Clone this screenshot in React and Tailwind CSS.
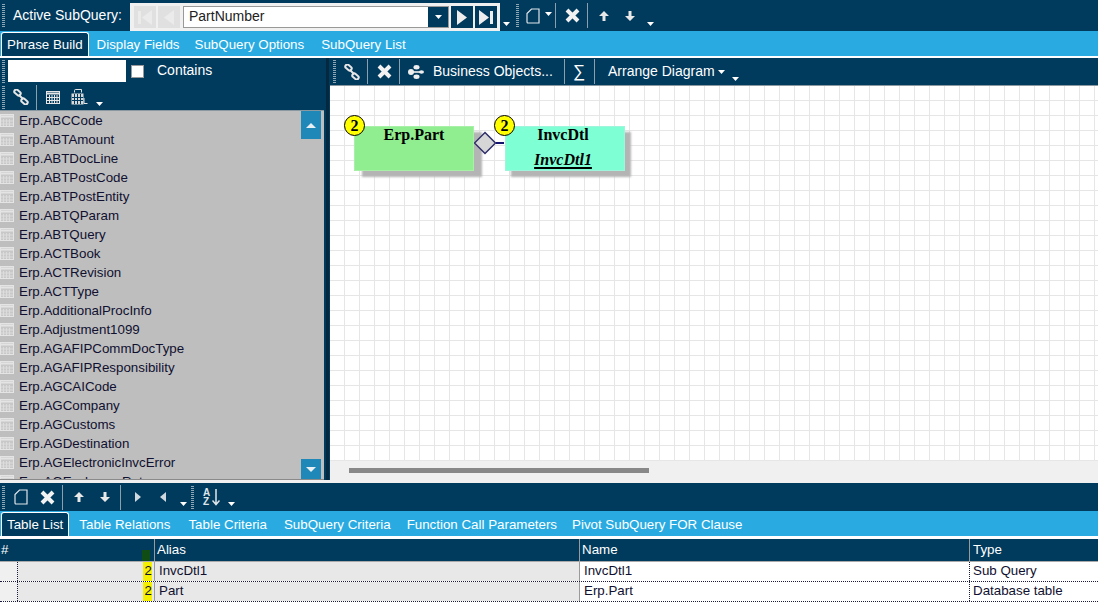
const tables = [
    'Erp.ABCCode', 'Erp.ABTAmount', 'Erp.ABTDocLine', 'Erp.ABTPostCode', 'Erp.ABTPostEntity',
    'Erp.ABTQParam', 'Erp.ABTQuery', 'Erp.ACTBook', 'Erp.ACTRevision', 'Erp.ACTType',
    'Erp.AdditionalProcInfo', 'Erp.Adjustment1099', 'Erp.AGAFIPCommDocType', 'Erp.AGAFIPResponsibility',
    'Erp.AGCAICode', 'Erp.AGCompany', 'Erp.AGCustoms', 'Erp.AGDestination', 'Erp.AGElectronicInvcError',
    'Erp.AGExchangeRate',
];

const Grip = ({ className = '' }) => (
    <div className={`w-[3px] h-[23px] shrink-0 bg-[repeating-linear-gradient(to_bottom,#8fa6b5_0_1px,transparent_1px_2px)] ${className}`} />
);

const Sep = ({ className = '' }) => <div className={`w-px h-[25px] shrink-0 bg-[#8c9fac] ${className}`} />;

const Caret = ({ className = '' }) => (
    <svg width="7" height="4" viewBox="0 0 7 4" className={`shrink-0 ${className}`}>
        <path d="M0 0h7L3.5 4z" fill="#fff" />
    </svg>
);

const LinkIcon = ({ className = '' }) => (
    <svg width="16" height="16" viewBox="0 0 16 16" className={`shrink-0 ${className}`} fill="none" stroke="#e6e6e6" strokeWidth="2">
        <rect x="1" y="1.500" width="7" height="4" rx="2" transform="rotate(40 4.500 3.500)" />
        <rect x="8" y="10.500" width="7" height="4" rx="2" transform="rotate(40 11.500 12.500)" />
        <path d="M6 6l4 4" />
    </svg>
);

const XIcon = ({ className = '' }) => (
    <svg width="15" height="15" viewBox="0 0 15 15" className={`shrink-0 ${className}`} stroke="#f2f2f2" strokeWidth="4">
        <path d="M2 2l11 11M13 2L2 13" />
    </svg>
);

const DocIcon = ({ className = '' }) => (
    <svg width="14" height="16" viewBox="0 0 14 16" className={`shrink-0 ${className}`} fill="none" stroke="#dfe5e9" strokeWidth="1.200">
        <path d="M1 5.500L5.500 1H13v14H2a1 1 0 0 1-1-1z" />
    </svg>
);

const ArrowIcon = ({ dir, className = '' }) => (
    <svg width="10" height="10" viewBox="0 0 10 10" className={`shrink-0 ${className}`} fill="#e8e8e8">
        {dir === 'up' ? <path d="M5 0l5 5H6.500v5h-3V5H0z" /> : <path d="M5 10L0 5h3.500V0h3v5H10z" />}
    </svg>
);

const BizIcon = () => (
    <svg width="16" height="14" viewBox="0 0 16 14" className="shrink-0" fill="#eee">
        <circle cx="3" cy="7" r="3" />
        <ellipse cx="8.500" cy="2.200" rx="3" ry="2.200" />
        <ellipse cx="8.500" cy="11.800" rx="3" ry="2.200" />
        <ellipse cx="13.500" cy="7" rx="2.500" ry="1.800" />
        <rect x="3" y="6.200" width="10" height="1.600" />
    </svg>
);

const CalendarIcon = () => (
    <svg width="14" height="13" viewBox="0 0 14 13" className="shrink-0" fill="none" stroke="#e6e6e6">
        <rect x="0.500" y="0.500" width="13" height="12" />
        <path d="M1 2.500h12" strokeWidth="2" />
        <path d="M3.500 4v8M6 4v8M8.500 4v8M11 4v8M1 6.500h12M1 9.500h12" />
    </svg>
);

const CalcIcon = () => (
    <svg width="17" height="16" viewBox="0 0 17 16" className="shrink-0" fill="none" stroke="#e6e6e6">
        <path d="M3.500 3.500V1.500C3.500.8 4 .5 4.500.5h6v3" />
        <rect x="0.500" y="4.500" width="12" height="11" fill="#d8d8d8" stroke="none" />
        <path d="M3.500 5v10M6.500 5v10M9.500 5v10M1 8.500h11M1 11.500h11" stroke="#003a5d" />
        <path d="M13 9v5.500h3.500" />
    </svg>
);

const TableRowIcon = () => (
    <svg width="14" height="13" viewBox="0 0 14 13" className="shrink-0" fill="none" stroke="#e4e4e4">
        <rect x="0.500" y="0.500" width="13" height="12" fill="#c8c8c8" />
        <path d="M1 2.500h12" strokeWidth="2" />
        <path d="M3.500 5v7M6.500 5v7M9.500 5v7M1 7h12M1 10h12" stroke="#dcdcdc" />
    </svg>
);

const Tri = ({ dir, fill = '#fff', small, className = '' }) => (
    <svg width={small ? 6 : 10} height={small ? 10 : 15} viewBox="0 0 10 15" preserveAspectRatio="none" className={`shrink-0 ${className}`}>
        <path d={dir === 'right' ? 'M0 0l10 7.500L0 15z' : 'M10 0L0 7.500 10 15z'} fill={fill} />
    </svg>
);

const Tab = ({ label, active, className = '' }) => (
    active ? (
        <div className={`h-[24px] px-[5px] mt-[1px] flex items-center bg-[#003a5d] text-white border border-b-0 border-white rounded-t-[3px] ${className}`}>
            {label}
        </div>
    ) : (
        <div className={`text-white pt-[2px] ${className}`}>{label}</div>
    )
);

const Badge = ({ className = '' }) => (
    <div className={`absolute w-[21px] h-[21px] rounded-full bg-[#ffff00] border border-black flex items-center justify-center font-bold text-[16px] text-black ${className}`}>
        2
    </div>
);

function TableRow({ alias, name, type }) {
    return (
        <div className="flex h-[20px] border-b border-dotted border-[#1a1a40] text-[#101030] text-[13.33px] leading-[18px]">
            <div className="w-[18px] shrink-0 bg-[#f0f0f0] border-r border-dotted border-[#1a1a40]" />
            <div className="w-[137px] shrink-0 bg-[#e8e8e8] flex justify-end border-r border-[#9a9a9a]">
                <span className="w-[9px] mr-[2px] bg-[#f5f000] text-right">2</span>
            </div>
            <div className="w-[425px] shrink-0 bg-[#e8e8e8] border-r border-[#9a9a9a] pl-[4px]">{alias}</div>
            <div className="w-[390px] shrink-0 bg-white border-r border-dotted border-[#1a1a40] pl-[4px]">{name}</div>
            <div className="flex-1 bg-white pl-[3px]">{type}</div>
        </div>
    );
}

export default function App() {
    return (
        <div className="w-[1098px] h-[602px] overflow-hidden bg-white text-[14px] font-['Liberation_Sans',Arial,sans-serif] flex flex-col">
            {/* top toolbar */}
            <div className="h-[31px] shrink-0 bg-[#003a5d] flex items-center text-white">
                <Grip className="ml-[2px]" />
                <span className="ml-[8px] w-[117px]">Active SubQuery:</span>
                <div className="w-[370px] h-[28px] mt-[3px] bg-[#f0f0f0] flex items-center pl-[4px]">
                    <div className="w-[22px] h-[22px] bg-[#e0e0e0] flex items-center justify-center gap-[1px]">
                        <div className="w-[3px] h-[13px] bg-[#ebebeb]" />
                        <Tri dir="left" fill="#ebebeb" />
                    </div>
                    <div className="w-[22px] h-[22px] ml-[2px] bg-[#e0e0e0] flex items-center justify-center">
                        <Tri dir="left" fill="#ebebeb" />
                    </div>
                    <div className="w-[266px] h-[22px] ml-[3px] bg-white border border-[#999] flex items-center">
                        <span className="flex-1 pl-[5px] text-[#222] -mt-[1px]">PartNumber</span>
                        <div className="w-[20px] h-full bg-[#003a5d] flex items-center justify-center">
                            <Caret />
                        </div>
                    </div>
                    <div className="w-[22px] h-[22px] ml-[2px] bg-[#003a5d] flex items-center justify-center">
                        <Tri dir="right" fill="#eee" />
                    </div>
                    <div className="w-[22px] h-[22px] ml-[2px] bg-[#003a5d] flex items-center justify-center gap-[1px]">
                        <Tri dir="right" fill="#eee" />
                        <div className="w-[3px] h-[13px] bg-[#eee]" />
                    </div>
                </div>
                <Caret className="ml-[3px] mt-[16px]" />
                <Grip className="ml-[6px]" />
                <DocIcon className="ml-[7px]" />
                <Caret className="ml-[5px] -mt-[3px]" />
                <Sep className="ml-[3px]" />
                <XIcon className="ml-[9px]" />
                <Sep className="ml-[7px]" />
                <ArrowIcon dir="up" className="ml-[11px]" />
                <ArrowIcon dir="down" className="ml-[16px]" />
                <Caret className="ml-[12px] mt-[16px]" />
            </div>

            {/* main tabs */}
            <div className="h-[25px] shrink-0 bg-[#29abe2] flex items-start pl-[1px] text-[13.33px]">
                <Tab label="Phrase Build" active />
                <Tab label="Display Fields" className="ml-[8px] mt-[2px]" />
                <Tab label="SubQuery Options" className="ml-[15px] mt-[2px]" />
                <Tab label="SubQuery List" className="ml-[17px] mt-[2px]" />
            </div>
            <div className="h-[2px] shrink-0 bg-white" />

            {/* work area */}
            <div className="h-[425px] shrink-0 flex bg-[#003a5d]">
                <div className="w-[330px] shrink-0 flex flex-col">
                    <div className="h-[422px] shrink-0 flex">
                        <div className="w-[326px] shrink-0 flex flex-col">
                            <div className="h-[26px] shrink-0 flex items-center text-white">
                                <Grip className="ml-[2px]" />
                                <div className="ml-[3px] w-[118px] h-[22px] bg-white" />
                                <div className="ml-[5px] w-[13px] h-[13px] bg-white border border-[#999]" />
                                <span className="ml-[13px] -mt-[2px]">Contains</span>
                            </div>
                            <div className="h-[26px] shrink-0 flex items-center">
                                <Grip className="ml-[2px]" />
                                <LinkIcon className="ml-[8px]" />
                                <Sep className="ml-[7px]" />
                                <div className="ml-[9px]"><CalendarIcon /></div>
                                <div className="ml-[11px]"><CalcIcon /></div>
                                <Caret className="ml-[8px] mt-[14px]" />
                            </div>
                            <div className="relative h-[370px] w-[324px] bg-[#bebebe] border-t border-[#8a98a2] border-b border-b-[#8a8a8a] overflow-hidden text-[#101030] text-[13.33px]">
                                {tables.map(t => (
                                    <div key={t} className="h-[19px] flex items-center">
                                        <TableRowIcon />
                                        <span className="ml-[5px]">{t}</span>
                                    </div>
                                ))}
                                {/* list scroll buttons */}
                                <div className="absolute right-[3px] top-0 w-[20px] h-[28px] bg-[#1f88b8] flex items-center justify-center">
                                    <svg width="10" height="5" viewBox="0 0 10 5"><path d="M5 0l5 5H0z" fill="#e8f0f4" /></svg>
                                </div>
                                <div className="absolute right-[3px] bottom-0 w-[20px] h-[20px] bg-[#1f88b8] flex items-center justify-center">
                                    <svg width="10" height="5" viewBox="0 0 10 5"><path d="M0 0h10L5 5z" fill="#e8f0f4" /></svg>
                                </div>
                            </div>
                        </div>
                        <div className="w-[3px] shrink-0 bg-[#06283f]" />
                    </div>
                    <div className="h-[3px] shrink-0 bg-[#f0f0f0]" />
                </div>

                <div className="flex-1 flex flex-col">
                    <div className="h-[28px] shrink-0 flex items-center text-white border-b border-[#8a98a2]">
                        <Grip className="ml-[3px]" />
                        <LinkIcon className="ml-[8px]" />
                        <Sep className="ml-[7px]" />
                        <XIcon className="ml-[9px]" />
                        <Sep className="ml-[7px]" />
                        <div className="ml-[8px]"><BizIcon /></div>
                        <span className="ml-[9px] w-[121px]">Business Objects...</span>
                        <Sep className="ml-[10px]" />
                        <span className="ml-[8px] w-[13px] text-[17px]">∑</span>
                        <Sep className="ml-[8px]" />
                        <span className="ml-[13px]">Arrange Diagram</span>
                        <Caret className="ml-[3px]" />
                        <Caret className="ml-[7px] mt-[14px]" />
                    </div>

                    {/* diagram canvas */}
                    <div className="relative h-[375px] shrink-0 bg-white bg-[linear-gradient(to_right,transparent_14px,#e6e6e6_14px),linear-gradient(to_bottom,transparent_14px,#e6e6e6_14px)] bg-[size:15px_15px] font-['Liberation_Serif',serif] text-black font-bold text-[16px]">
                        <div className="absolute left-[24px] top-[40px] w-[120px] h-[45px] bg-[#90ee90] border border-[#a8f0a8] shadow-[8px_6px_2px_#b4b4b4] text-center leading-[16px]">
                            Erp.Part
                        </div>
                        <Badge className="left-[14px] top-[29px]" />
                        <svg width="34" height="24" viewBox="0 0 34 24" className="absolute left-[144px] top-[45px]">
                            <path d="M11 1.500l10.500 10.500-10.500 10.500L0.500 12z" fill="#d6d6d6" stroke="#2f2f6b" strokeWidth="1.500" />
                            <path d="M22 12h8" stroke="#14146e" strokeWidth="2" />
                        </svg>
                        <div className="absolute left-[175px] top-[40px] w-[120px] h-[45px] bg-[#7fffd4] border border-[#9ff5dc] shadow-[6px_6px_2px_#b4b4b4] text-center leading-[16px] pr-[4px]">
                            InvcDtl
                            <div className="italic underline decoration-2 underline-offset-2 mt-[9px]">InvcDtl1</div>
                        </div>
                        <Badge className="left-[164px] top-[29px]" />
                    </div>

                    <div className="h-[22px] shrink-0 bg-[#f0f0f0] pt-[7px]">
                        <div className="ml-[19px] w-[300px] h-[5px] bg-[#888]" />
                    </div>
                </div>
            </div>

            {/* bottom toolbar */}
            <div className="h-[28px] shrink-0 bg-[#003a5d] flex items-center">
                <Grip className="ml-[2px]" />
                <DocIcon className="ml-[9px]" />
                <XIcon className="ml-[12px]" />
                <Sep className="ml-[7px]" />
                <ArrowIcon dir="up" className="ml-[11px]" />
                <ArrowIcon dir="down" className="ml-[16px]" />
                <Sep className="ml-[10px]" />
                <Tri dir="right" small fill="#cfd8de" className="ml-[14px]" />
                <Tri dir="left" small fill="#cfd8de" className="ml-[19px]" />
                <Caret className="ml-[14px] mt-[14px]" />
                <Grip className="ml-[4px]" />
                <div className="ml-[9px] w-[9px] text-[10px] leading-[9px] font-bold text-[#dfe6ea]">
                    <div>A</div>
                    <div>Z</div>
                </div>
                <svg width="8" height="17" viewBox="0 0 8 17" className="shrink-0" fill="none" stroke="#dfe6ea" strokeWidth="1.500">
                    <path d="M4 0v15M0.500 11.500L4 15.500l3.500-4" />
                </svg>
                <Caret className="ml-[8px] mt-[14px]" />
            </div>

            {/* bottom tabs */}
            <div className="h-[25px] shrink-0 bg-[#29abe2] flex items-start pl-[1px] text-[13.33px]">
                <Tab label="Table List" active />
                <Tab label="Table Relations" className="ml-[10px] mt-[2px]" />
                <Tab label="Table Criteria" className="ml-[18px] mt-[2px]" />
                <Tab label="SubQuery Criteria" className="ml-[17px] mt-[2px]" />
                <Tab label="Function Call Parameters" className="ml-[16px] mt-[2px]" />
                <Tab label="Pivot SubQuery FOR Clause" className="ml-[15px] mt-[2px]" />
            </div>
            <div className="h-[3px] shrink-0 bg-white" />

            {/* grid */}
            <div className="flex h-[23px] shrink-0 bg-[#003a5d] text-white border-b border-[#aaa] leading-[22px] text-[13.33px]">
                <div className="relative w-[155px] shrink-0 border-r border-[#9a9a9a] pl-[1px]">
                    #
                    <div className="absolute left-[142px] top-[11px] w-[8px] h-[11px] bg-[#0f4d14]" />
                </div>
                <div className="w-[425px] shrink-0 border-r border-[#9a9a9a] pl-[2px]">Alias</div>
                <div className="w-[390px] shrink-0 border-r border-[#9a9a9a] pl-[2px]">Name</div>
                <div className="flex-1 pl-[3px]">Type</div>
            </div>
            <TableRow alias="InvcDtl1" name="InvcDtl1" type="Sub Query" />
            <TableRow alias="Part" name="Erp.Part" type="Database table" />
        </div>
    );
}
